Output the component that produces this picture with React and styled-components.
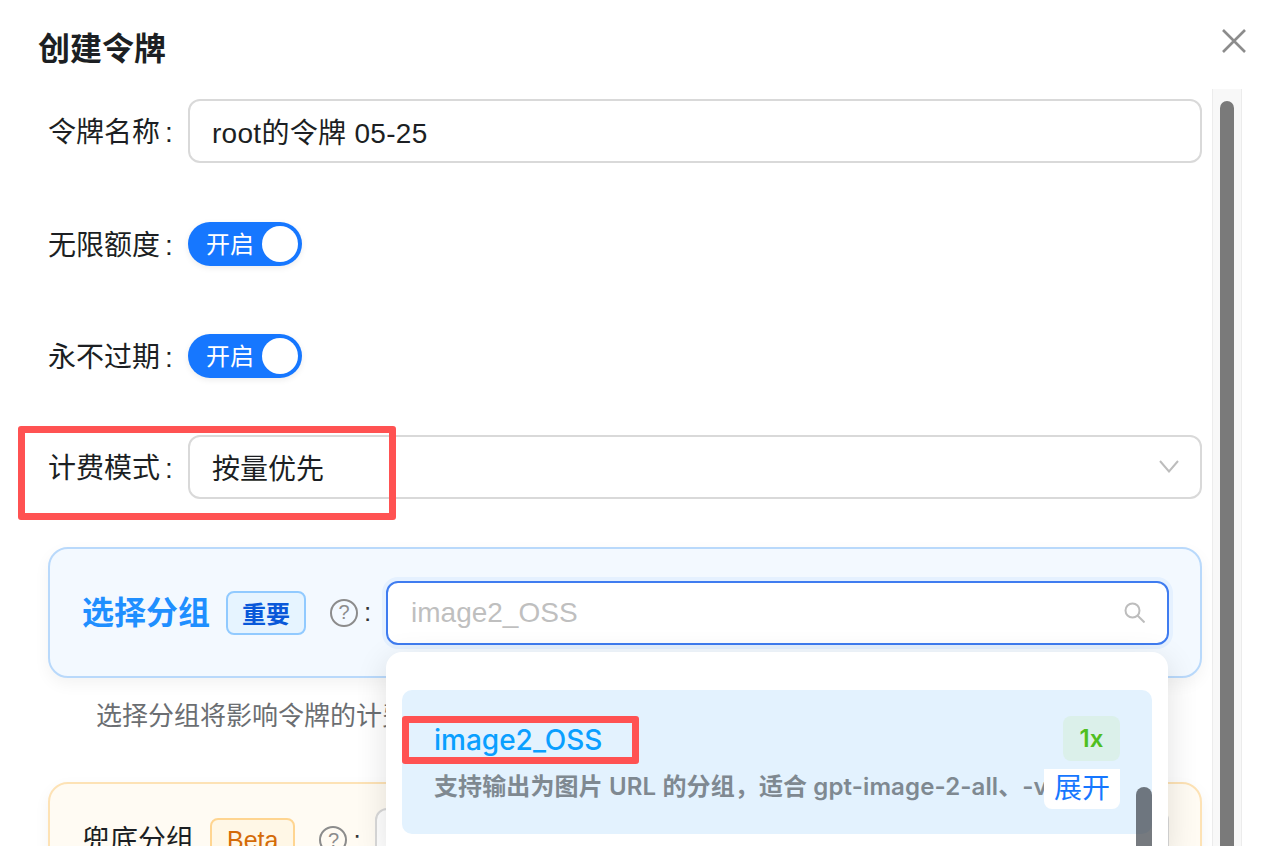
import React from 'react';
import styled, { createGlobalStyle } from 'styled-components';

const FONT = `"Liberation Sans", "Noto Sans CJK SC", sans-serif`;
const UI_FONT = `Inter, "Noto Sans CJK SC", sans-serif`;

const GlobalStyle = createGlobalStyle`
    html, body {
        margin: 0;
        height: 100%;
        overflow: hidden;
        background: #fff;
    }
    * { box-sizing: border-box; }
`;

const FieldLabel = ({ children }) => (
    <Label>{children}<LabelColon>:</LabelColon></Label>
);

const Switch = () => (
    <Toggle><span>开启</span><i /></Toggle>
);

const App = () => {
    return (
        <Dialog>
            <GlobalStyle />
            <Header>
                <Title>创建令牌</Title>
                <CloseButton>
                    <svg width="24" height="24" viewBox="0 0 24 24">
                        <path d="M1 1 L23 23 M23 1 L1 23" stroke="currentColor" strokeWidth="2.6" fill="none" />
                    </svg>
                </CloseButton>
            </Header>
            <Body>
                <Form>
                    <Row $mb={59}>
                        <FieldLabel>令牌名称</FieldLabel>
                        <Input $spaced>root的令牌 05-25</Input>
                    </Row>
                    <Row $mb={68}>
                        <FieldLabel>无限额度</FieldLabel>
                        <Switch />
                    </Row>
                    <Row $mb={57}>
                        <FieldLabel>永不过期</FieldLabel>
                        <Switch />
                    </Row>
                    <Row $mb={48}>
                        <FieldLabel>计费模式</FieldLabel>
                        <Input>
                            按量优先
                            <SelectArrow width="20" height="13" viewBox="0 0 20 13">
                                <path d="M1 1 L10 11.5 L19 1" stroke="currentColor" strokeWidth="2" fill="none" />
                            </SelectArrow>
                        </Input>
                    </Row>
                    <Card $tone="blue">
                        <CardTitle $tone="blue">选择分组</CardTitle>
                        <Tag $tone="blue">重要</Tag>
                        <Help>?</Help>
                        <Colon>:</Colon>
                        <SearchBox>
                            image2_OSS
                            <svg width="21" height="21" viewBox="0 0 21 21">
                                <circle cx="8.5" cy="8.5" r="7" stroke="currentColor" strokeWidth="2" fill="none" />
                                <path d="M13.5 13.5 L20.5 20.5" stroke="currentColor" strokeWidth="2" fill="none" />
                            </svg>
                        </SearchBox>
                    </Card>
                    <Hint>选择分组将影响令牌的计费倍率和可用模型</Hint>
                    <Card $tone="orange">
                        <CardTitle $tone="orange">兜底分组</CardTitle>
                        <Tag $tone="orange">Beta</Tag>
                        <Help>?</Help>
                        <Colon>:</Colon>
                        <FallbackInput />
                    </Card>
                    <Dropdown>
                        <Option>
                            <OptionTop>
                                <OptionName>image2_OSS</OptionName>
                                <Ratio>1x</Ratio>
                            </OptionTop>
                            <OptionDesc>支持输出为图片 URL 的分组，适合 gpt-image-2-all、-vip 等模型</OptionDesc>
                            <Expand>展开</Expand>
                        </Option>
                        <DropdownThumb />
                    </Dropdown>
                </Form>
                <Scrollbar><Thumb /></Scrollbar>
            </Body>
            <Highlight $left={18} $top={426} $width={378} $height={94} />
            <Highlight $left={402} $top={716} $width={237} $height={48} />
        </Dialog>
    );
}

export default App;

const Dialog = styled.div`
    position: relative;
    width: 1278px;
    height: 846px;
    overflow: hidden;
    background: #fff;
    font-family: ${FONT};
    color: #1c1f23;
`;

const Header = styled.div`
    height: 88px;
    padding: 27px 32px 0 38px;
    display: flex;
    align-items: flex-start;
    justify-content: space-between;
`;

const Title = styled.h1`
    margin: 0;
    font-size: 32px;
    line-height: 44px;
    font-weight: 700;
`;

const CloseButton = styled.div`
    display: flex;
    color: #8c8c8c;
    margin-top: 2px;
`;

const Body = styled.div`
    display: flex;
    align-items: flex-start;
    height: 758px;
    padding-left: 48px;
`;

const Form = styled.div`
    position: relative;
    width: 1154px;
    padding-top: 11px;
`;

const Row = styled.div`
    display: flex;
    align-items: center;
    margin-bottom: ${p => p.$mb}px;
`;

const Label = styled.label`
    width: 140px;
    padding-top: 3px;
    font-size: 28px;
    line-height: 40px;
    white-space: nowrap;
`;

const LabelColon = styled.span`
    margin-left: 5px;
    font-family: "Liberation Sans", sans-serif;
`;

const Input = styled.div`
    position: relative;
    flex: 1;
    height: 64px;
    padding: 0 22px 1px;
    display: flex;
    align-items: center;
    font-size: 28px;
    letter-spacing: ${p => (p.$spaced ? '0.3px' : '0')};
    border: 2px solid #d9d9d9;
    border-radius: 12px;
    background: #fff;
`;

const SelectArrow = styled.svg`
    position: absolute;
    right: 21px;
    top: 23px;
    color: #bdbdbd;
`;

const Toggle = styled.div`
    width: 114px;
    height: 44px;
    padding: 0 4px 0 18px;
    border-radius: 22px;
    display: flex;
    align-items: center;
    justify-content: space-between;
    background: #1677ff;
    color: #fff;
    font-size: 24px;
    box-shadow: 0 2px 6px rgba(0, 0, 0, 0.08);

    span { padding-bottom: 3px; }

    i {
        width: 36px;
        height: 36px;
        border-radius: 50%;
        background: #fff;
    }
`;

const TONES = {
    blue: {
        height: 131, bg: '#f3f9ff', border: '#b9d9fb', title: '#1f8fff', titleSize: 32, titleWeight: 700,
        tagBg: '#e6f4ff', tagBorder: '#91caff', tagText: '#0958d9', tagSize: 24, tagWeight: 700, tagPad: 14,
    },
    orange: {
        height: 116, bg: '#fffbf3', border: '#fde2b5', title: '#1c1f23', titleSize: 28, titleWeight: 400,
        tagBg: '#fff7e6', tagBorder: '#ffd591', tagText: '#d46b08', tagSize: 25, tagWeight: 400, tagPad: 15,
    },
};

const Card = styled.div`
    height: ${p => TONES[p.$tone].height}px;
    padding: 0 31px 0 32px;
    display: flex;
    align-items: center;
    background: ${p => TONES[p.$tone].bg};
    border: 2px solid ${p => TONES[p.$tone].border};
    border-radius: 20px;
    box-shadow: 0 6px 16px rgba(0, 0, 0, 0.05);
`;

const CardTitle = styled.span`
    padding-bottom: 5px;
    font-size: ${p => TONES[p.$tone].titleSize}px;
    font-weight: ${p => TONES[p.$tone].titleWeight};
    color: ${p => TONES[p.$tone].title};
    white-space: nowrap;
`;

const Tag = styled.span`
    margin-left: 16px;
    height: 44px;
    padding: 0 ${p => TONES[p.$tone].tagPad}px;
    display: flex;
    align-items: center;
    font-size: ${p => TONES[p.$tone].tagSize}px;
    font-weight: ${p => TONES[p.$tone].tagWeight};
    color: ${p => TONES[p.$tone].tagText};
    background: ${p => TONES[p.$tone].tagBg};
    border: 2px solid ${p => TONES[p.$tone].tagBorder};
    border-radius: 8px;
`;

const Help = styled.span`
    margin-left: 24px;
    flex: none;
    width: 28px;
    height: 28px;
    display: flex;
    align-items: center;
    justify-content: center;
    font-size: 20px;
    color: #8c8c8c;
    border: 2px solid #8c8c8c;
    border-radius: 50%;
`;

const Colon = styled.span`
    flex: none;
    width: 28px;
    padding-left: 6px;
    font-size: 26px;
    color: #333;
`;

const SearchBox = styled.div`
    flex: 1;
    height: 64px;
    padding: 0 22px 0 23px;
    display: flex;
    align-items: center;
    justify-content: space-between;
    font-size: 28px;
    color: #bfbfbf;
    background: #fff;
    border: 2px solid #3f7cf0;
    border-radius: 12px;
    box-shadow: 0 0 0 4px rgba(22, 119, 255, 0.06);

    svg { color: #bdbdbd; }
`;

const FallbackInput = styled.div`
    flex: 1;
    height: 64px;
    background: #fff;
    border: 2px solid #d9d9d9;
    border-radius: 12px;
`;

const Hint = styled.p`
    margin: 0;
    height: 104px;
    padding: 21px 48px 0;
    font-size: 26px;
    line-height: 34px;
    color: #6b6e72;
`;

const Dropdown = styled.div`
    position: absolute;
    left: 338px;
    top: 564px;
    width: 782px;
    height: 200px;
    padding: 38px 16px 0;
    background: #fff;
    border-radius: 16px 16px 0 0;
    box-shadow: 0 8px 32px rgba(0, 0, 0, 0.12);
`;

const Option = styled.div`
    position: relative;
    height: 144px;
    padding: 26px 32px 0;
    background: #e3f2fe;
    border-radius: 10px;
`;

const OptionTop = styled.div`
    display: flex;
    align-items: flex-start;
    justify-content: space-between;
`;

const OptionName = styled.span`
    margin-top: 2px;
    font-family: ${UI_FONT};
    font-size: 28px;
    line-height: 44px;
    font-weight: 500;
    color: #0a9fff;
`;

const Ratio = styled.span`
    width: 57px;
    height: 45px;
    display: flex;
    align-items: center;
    justify-content: center;
    font-family: ${UI_FONT};
    font-size: 24px;
    font-weight: 600;
    color: #4fbf1f;
    background: #dbf0ea;
    border-radius: 8px;
`;

const OptionDesc = styled.div`
    width: 620px;
    margin-top: 8px;
    overflow: hidden;
    white-space: nowrap;
    font-family: ${UI_FONT};
    font-size: 24px;
    line-height: 34px;
    font-weight: 600;
    letter-spacing: 0.12px;
    color: #7f8991;
`;

const Expand = styled.span`
    position: absolute;
    left: 642px;
    top: 79px;
    width: 76px;
    height: 40px;
    padding-bottom: 6px;
    display: flex;
    align-items: center;
    justify-content: center;
    font-size: 28px;
    color: #1677ff;
    background: #fff;
    border-radius: 0 0 8px 8px;
`;

const DropdownThumb = styled.div`
    position: absolute;
    left: 750px;
    top: 135px;
    width: 16px;
    height: 120px;
    border-radius: 8px;
    background: rgba(60, 66, 72, 0.7);
`;

const Scrollbar = styled.div`
    width: 30px;
    height: 757px;
    margin: 1px 0 0 10px;
    padding: 12px 7px 0;
    background: #f8f8f8;
    border-left: 1px solid #ececec;
    border-right: 1px solid #ececec;
`;

const Thumb = styled.div`
    width: 14px;
    height: 800px;
    border-radius: 7px;
    background: #7a7a7a;
`;

const Highlight = styled.div`
    position: absolute;
    left: ${p => p.$left}px;
    top: ${p => p.$top}px;
    width: ${p => p.$width}px;
    height: ${p => p.$height}px;
    border: 7px solid #ff5252;
    border-radius: 3px;
    pointer-events: none;
`;
